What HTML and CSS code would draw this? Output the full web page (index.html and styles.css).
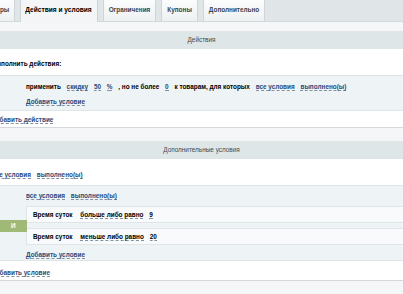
FILE: index.html
```html
<!DOCTYPE html>
<html lang="ru">
<head>
    <meta charset="UTF-8">
    <title>Правило работы с корзиной</title>
    <link rel="stylesheet" href="styles.css">
</head>
<body>
    <div class="tabs">
        <div class="tab first">Параметры</div>
        <div class="tab active">Действия и условия</div>
        <div class="tab">Ограничения</div>
        <div class="tab">Купоны</div>
        <div class="tab">Дополнительно</div>
    </div>

    <div class="content">
        <div class="strip"></div>
        <div class="heading">Действия</div>
        <div class="tree">
            <div class="row title"><b>Выполнить действия:</b></div>
            <div class="block">
                <div class="line">
                    <b>применить</b>
                    <span class="link">скидку</span>
                    <span class="link">50</span>
                    <span class="link">%</span>
                    <b>, но не более</b>
                    <span class="link">0</span>
                    <b>к товарам, для которых</b>
                    <span class="link">все условия</span>
                    <span class="link">выполнено(ы)</span>
                </div>
                <div class="line add"><span class="link">Добавить условие</span></div>
            </div>
            <div class="row last"><span class="link">Добавить действие</span></div>
        </div>

        <div class="strip tall"></div>
        <div class="heading">Дополнительные условия</div>
        <div class="tree">
            <div class="row title second">
                <span class="link">Все условия</span>
                <span class="link">выполнено(ы)</span>
            </div>
            <div class="block group">
                <div class="line">
                    <span class="link">все условия</span>
                    <span class="link">выполнено(ы)</span>
                </div>
                <div class="conds">
                    <div class="cond">
                        <b>Время суток</b>
                        <span class="link dark">больше либо равно</span>
                        <span class="link dark">9</span>
                    </div>
                    <div class="cond">
                        <b>Время суток</b>
                        <span class="link dark">меньше либо равно</span>
                        <span class="link dark">20</span>
                    </div>
                    <div class="and">И</div>
                </div>
                <div class="line add"><span class="link">Добавить условие</span></div>
            </div>
            <div class="row last bottom"><span class="link">Добавить условие</span></div>
        </div>
    </div>
</body>
</html>
```

FILE: styles.css
```css
body {
    margin: 0;
    width: 403px;
    height: 294px;
    overflow: hidden;
    font-family: "Liberation Sans", Arial, sans-serif;
    font-size: 6.4px;
    line-height: 10px;
    color: #000;
    background-color: #f4f6f7;
}
b {
    font-weight: bold;
}
.tabs {
    display: flex;
    gap: 5px;
    height: 22px;
    background-color: #e0e6e8;
    border-bottom: 1px solid #d3dadd;
    box-sizing: border-box;
}
.tab {
    height: 21px;
    padding: 5px 5px 0;
    box-sizing: border-box;
    font-size: 6.4px;
    font-weight: bold;
    color: #3b4447;
    background: linear-gradient(#fbfcfc, #eef1f2);
    border: 1px solid #cdd5d8;
    border-top: none;
    border-bottom: none;
    white-space: nowrap;
}
.tab.first {
    margin-left: -33px;
}
.tab.active {
    height: 22px;
    font-size: 6.6px;
    color: #000;
    background: #f3f5f6;
    padding-left: 4px;
    padding-right: 5px;
}
.strip {
    height: 9px;
}
.strip.tall {
    height: 13px;
}
.heading {
    height: 18px;
    line-height: 18px;
    text-align: center;
    color: #3f4b4f;
    background-color: #dfe6e8;
}
.tree {
    margin-left: -9px;
    background-color: #fff;
}
.row {
    white-space: nowrap;
    box-sizing: border-box;
}
.row.title {
    height: 27px;
    padding-top: 10px;
    border-bottom: 1px solid #dce3e6;
}
.row.title.second {
    padding-top: 11px;
}
.row.last {
    height: 17px;
    padding-top: 4px;
    border-bottom: 1px solid #d3d9dc;
}
.row.last.bottom {
    height: 20px;
    padding-top: 7px;
}
.block {
    background-color: #eef3f5;
    padding: 6px 0 3px 35px;
    border-bottom: 1px solid #dfe6e8;
    white-space: nowrap;
}
.block.group {
    padding: 5px 0 0 35px;
}
.line {
    height: 10px;
}
.line.add {
    margin-top: 5px;
}
.link {
    font-weight: bold;
    color: #2b4a78;
    border-bottom: 1px dashed #8493a3;
    margin-left: 4px;
}
.line > :first-child, .row > :first-child, .cond > :first-child {
    margin-left: 0;
}
.line b {
    margin-left: 4px;
}
.link.dark {
    color: #000;
}
.conds {
    position: relative;
    margin-top: 5px;
}
.cond {
    height: 17px;
    padding: 3px 0 0 6px;
    box-sizing: border-box;
    background-color: #f8fafb;
    border: 1px solid #dfe5e8;
    border-right: none;
    margin-bottom: 5px;
}
.cond b {
    margin-right: 2px;
}
.and {
    position: absolute;
    left: -26px;
    top: 14px;
    width: 27px;
    height: 12px;
    line-height: 12px;
    padding-left: 11px;
    box-sizing: border-box;
    font-weight: bold;
    color: #fff;
    background-color: #a1b976;
}
```
